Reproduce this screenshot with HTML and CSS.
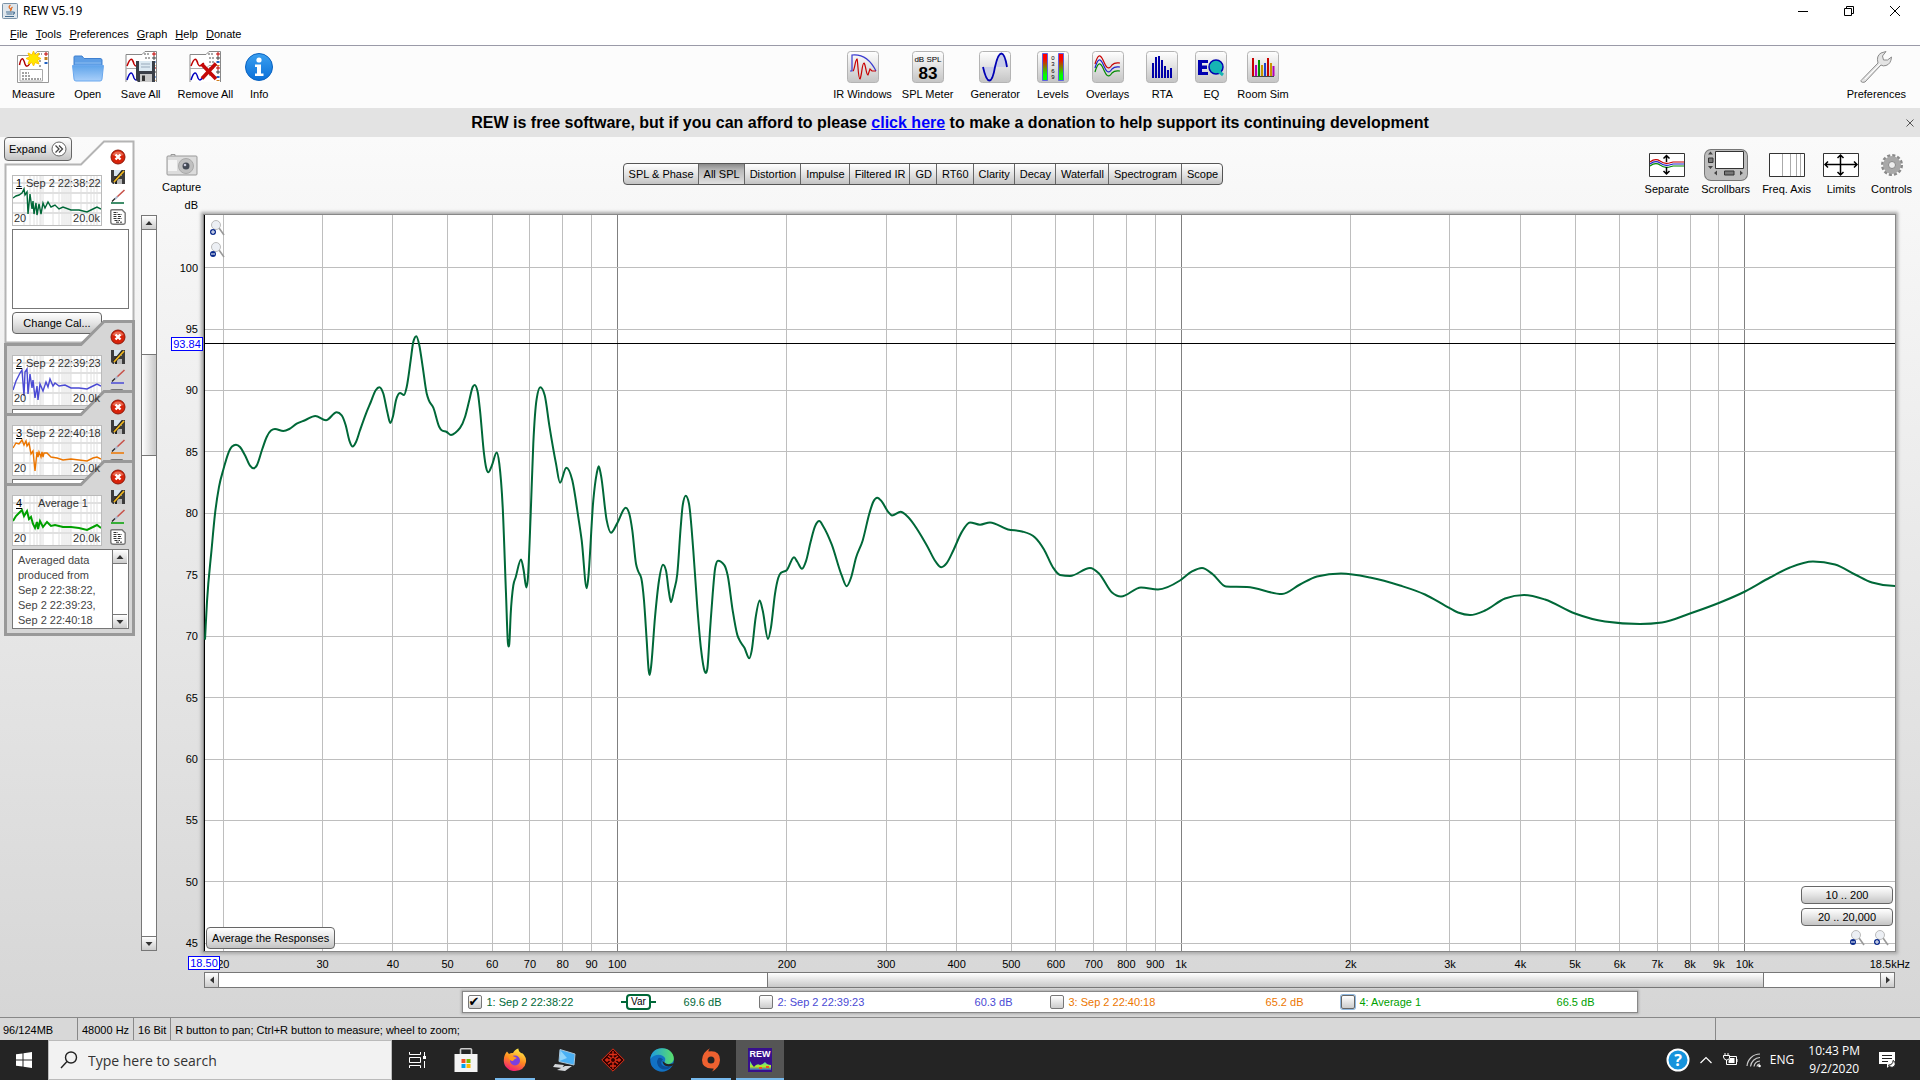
FILE: index.html
```
<!DOCTYPE html>
<html lang="en">
<head>
    <meta charset="UTF-8">
    <meta name="viewport" content="width=device-width, initial-scale=1.0">
    <title>REW V5.19</title>
    <link rel="stylesheet" href="styles.css">
</head>
<body>
    <!-- shared icons -->
    <svg class="defs" aria-hidden="true">
        <defs>
            <linearGradient id="gKey" x1="0" y1="0" x2="0" y2="1"><stop offset="0" stop-color="#fff"/><stop offset="1" stop-color="#c4c4c4"/></linearGradient>
            <linearGradient id="gBlue" x1="0" y1="0" x2="0" y2="1"><stop offset="0" stop-color="#5fa4ea"/><stop offset="1" stop-color="#a9cffa"/></linearGradient>
            <linearGradient id="gInfo" x1="0" y1="0" x2="0" y2="1"><stop offset="0" stop-color="#3ba0f0"/><stop offset="1" stop-color="#0a6fd8"/></linearGradient>
            <linearGradient id="gLevel" x1="0" y1="0" x2="0" y2="1"><stop offset="0.2" stop-color="#f00"/><stop offset="0.8" stop-color="#0f0"/></linearGradient>
            <linearGradient id="gFox" x1="0.7" y1="0" x2="0.3" y2="1"><stop offset="0" stop-color="#fff04a"/><stop offset="0.5" stop-color="#ff8a1f"/><stop offset="1" stop-color="#f0187a"/></linearGradient>
            <linearGradient id="gEdge" x1="0" y1="0" x2="1" y2="0"><stop offset="0" stop-color="#1d9be0"/><stop offset="1" stop-color="#5be06a"/></linearGradient>
            <linearGradient id="gRew" x1="0" y1="0" x2="0" y2="1"><stop offset="0" stop-color="#2ad0e0"/><stop offset="0.6" stop-color="#b8f020"/><stop offset="1" stop-color="#3050d0"/></linearGradient>
        </defs>
        <symbol id="key" viewBox="0 0 32 32"><rect x="0.5" y="0.5" width="31" height="31" rx="3" fill="url(#gKey)" stroke="#b4b4b4"/></symbol>
        <symbol id="sheets" viewBox="0 0 32 32">
            <path d="M1 3.500H17L20 .5H31V31H1Z" fill="#fff"/>
            <path d="M1 31V3.500H17L20 .5H31.500V31" fill="none" stroke="#888"/>
            <path d="M1 17.500H17L20 14.500H28" fill="none" stroke="#aaa"/>
            <path d="M2 15C5 7 7 6 9 13 11 17 12 14 15 12" fill="none" stroke="#c00000" stroke-width="1.500"/>
            <path d="M2 29C5 20 7 20 9 27 11 31 12 28 15 26" fill="none" stroke="#0000c0" stroke-width="1.500"/>
            <path d="M19 3H25M20 7H25M20 11H25M20 17H25M20 24H25" stroke="#555" stroke-dasharray="2 1"/>
            <path d="M28 2h2v2h-2zM28 16h2v2h-2z" fill="#fff" stroke="#c00000"/>
            <path d="M28 6h2v2h-2zM28 20h2v2h-2z" fill="#fff" stroke="#444"/>
            <path d="M27.500 10h3v2h-3zM27.500 25h3v2h-3z" fill="#2060c0"/>
            <path d="M27.500 14h3v1h-3zM27.500 29h3v1h-3z" fill="#d08020"/>
        </symbol>
        <symbol id="close" viewBox="0 0 16 16"><circle cx="8" cy="8" r="7" fill="#d8230a" stroke="#8e1a0a"/><path d="M2.500 6A6 6 0 0 1 13.500 6Q8 8 2.500 6" fill="#f08a70" opacity=".7"/><path d="M5.500 5.500 10.500 10.500M10.500 5.500 5.500 10.500" stroke="#fff" stroke-width="2.400"/></symbol>
        <symbol id="save" viewBox="0 0 16 16"><path d="M1 1H15V15H3L1 13Z" fill="#3c3c3c"/><path d="M4 1H12V7H4Z" fill="#d5e3ee"/><path d="M4 10H12V15H4Z" fill="#b8b8b8"/><path d="M5 11H7V15H5Z" fill="#222"/><path d="M4 13 13 2" stroke="#222" stroke-width="3.400"/><path d="M4 13 14 2" stroke="#f0b820" stroke-width="1.800"/></symbol>
        <symbol id="brush" viewBox="0 0 16 16"><path d="M14.500 1 7 8" stroke="#c8524a" stroke-width="1.600"/><path d="M7.500 7.500 5 10" stroke="#b0bcd0" stroke-width="2"/><path d="M5 9.500 2 12.500" stroke="#222" stroke-width="1.200"/><path d="M1 14H14" stroke="currentColor" stroke-width="1.500"/></symbol>
        <symbol id="note" viewBox="0 0 16 16"><path d="M2 .8H12L15.200 4V13.500Q15.200 15.200 13.500 15.200H3.500Q.8 15.200 .8 13V2Q.8 .8 2 .8Z" fill="#fff" stroke="#777" stroke-width="1.400"/><path d="M3.500 3.500H8M3.500 5.500H12M3.500 7.500H7M8 7.500H12M3.500 9.500H12M4.500 11.500H10M6 13.200H12" stroke="#333" stroke-dasharray="3 1"/></symbol>
        <symbol id="zoomIn" viewBox="0 0 16 16"><path d="M10 8 15 15" stroke="#999" stroke-width="1.600"/><circle cx="7" cy="5" r="4.500" fill="#eceff4" stroke="#bbb"/><circle cx="4" cy="12" r="3" fill="#0a2a8c"/><path d="M2 12H6M4 10V14" stroke="#fff"/></symbol>
        <symbol id="zoomOut" viewBox="0 0 16 16"><path d="M10 8 15 15" stroke="#999" stroke-width="1.600"/><circle cx="7" cy="5" r="4.500" fill="#eceff4" stroke="#bbb"/><circle cx="4" cy="12" r="3" fill="#0a2a8c"/><path d="M2 12H6" stroke="#fff"/></symbol>
        <symbol id="up" viewBox="0 0 8 8"><path d="M.5 6 4 2 7.500 6Z" fill="#333"/></symbol>
        <symbol id="down" viewBox="0 0 8 8"><path d="M.5 2 4 6 7.500 2Z" fill="#333"/></symbol>
        <symbol id="left" viewBox="0 0 8 8"><path d="M6 .5 2 4 6 7.500Z" fill="#333"/></symbol>
        <symbol id="right" viewBox="0 0 8 8"><path d="M2 .5 6 4 2 7.500Z" fill="#333"/></symbol>
    </svg>

    <header class="titlebar">
        <svg class="java" viewBox="0 0 16 16"><rect x=".5" y=".5" width="15" height="15" rx="1" fill="#dfe6ec" stroke="#7b93a8"/><path d="M8.500 2Q6 4 8 5.500T8 8M10.500 4Q8.500 5.500 9.500 7" fill="none" stroke="#e0702a" stroke-width="1.300"/><path d="M4 9H11M4.500 11H10.500M3 13.500H12M11 9Q14 9 11 11.500" fill="none" stroke="#456d90" stroke-width="1.200"/></svg>
        <h1>REW V5.19</h1>
        <div class="window-btns">
            <button aria-label="Minimize"><svg viewBox="0 0 10 10"><path d="M0 5.500H10"/></svg></button>
            <button aria-label="Restore"><svg viewBox="0 0 10 10"><path d="M.5 2.500H7.500V9.500H.5ZM2.500 2.500V.5H9.500V7.500H7.500"/></svg></button>
            <button aria-label="Close"><svg viewBox="0 0 10 10"><path d="M0 0 10 10M10 0 0 10"/></svg></button>
        </div>
    </header>
    <nav class="menubar">
        <button><u>F</u>ile</button>
        <button><u>T</u>ools</button>
        <button><u>P</u>references</button>
        <button><u>G</u>raph</button>
        <button><u>H</u>elp</button>
        <button><u>D</u>onate</button>
    </nav>

    <div class="toolbar">
        <div class="tools">
            <button class="tool">
                <svg viewBox="0 0 32 32"><path d="M.5 4.500H17L20 .5H31.500V31.500H.5Z" fill="#fff" stroke="#999"/><path d="M2.500 14C4 6 6 6 8 13 9 16 11 16 13 12" fill="none" stroke="#b00000" stroke-width="1.500"/><path d="M3 18.500H25.500V30H3Z" fill="#fff" stroke="#aaa"/><path d="M5 22H12M5 25H14M5 28H24M21 3H25M22 10H25M22 15H25" stroke="#444" stroke-dasharray="2 1"/><path d="M28 2h2v2h-2z" fill="#fff" stroke="#c00000"/><path d="M27.500 6h3v3h-3z" fill="#c08020"/><path d="M27.500 11h3v2h-3z" fill="#2060c0"/><path d="M16.500 0 18 4 22 2 20.500 6 24 7.500 20.500 9 22 13 18 11.500 16.500 15 15 11.500 11 13 12.500 9 9 7.500 12.500 6 11 2 15 4Z" fill="#ffe600" stroke="#ffc800"/></svg>
                <span>Measure</span>
            </button>
            <button class="tool">
                <svg viewBox="0 0 32 32"><path d="M2 17V6Q2 5 3 5H10L12 7.500H28Q30 7.500 30 9V17Z" fill="#5f9fe6" stroke="#3f80d0"/><path d="M3 12H29" stroke="#8cbcf0"/><path d="M.5 14.500H31.500L30 28Q30 30 28 30H4Q2 30 2 28Z" fill="url(#gBlue)" stroke="#6aa8ee"/></svg>
                <span>Open</span>
            </button>
            <button class="tool">
                <svg viewBox="0 0 32 32"><use href="#sheets"/><path d="M11 10H30V31H13L11 29Z" fill="#3a3f48"/><path d="M14 10H27V20H14Z" fill="#dce9f2"/><path d="M16 13H25M16 16H25" stroke="#9ab"/><path d="M15 23H27V31H15Z" fill="#c8c8c8"/><path d="M17 24.500H20V30H17Z" fill="#333"/></svg>
                <span>Save All</span>
            </button>
            <button class="tool">
                <svg viewBox="0 0 32 32"><use href="#sheets"/><path d="M12.500 13 27 28M27 12.500 13 27.500" stroke="#c40808" stroke-width="3.600"/></svg>
                <span>Remove All</span>
            </button>
            <button class="tool tight">
                <svg viewBox="0 0 32 32"><circle cx="16" cy="16" r="13.500" fill="url(#gInfo)" stroke="#0a62c0"/><circle cx="16" cy="9" r="2.600" fill="#fff"/><path d="M12 13.500H18V22.500H20.500V25H12V22.500H14V16H12Z" fill="#fff"/></svg>
                <span>Info</span>
            </button>
        </div>
        <div class="tools">
            <button class="tool">
                <svg viewBox="0 0 32 32"><use href="#key"/><path d="M3 20H5V4C14 3 23 8 29 20" fill="none" stroke="#3a3ad0" stroke-width="1.200"/><path d="M6 20C8 18 8 9 10 8 11 10 11 28 13 28 15 24 15 12 17 12 19 14 19 24 21 24L23 18 25 20H29" fill="none" stroke="#c80000" stroke-width="1.200"/></svg>
                <span>IR Windows</span>
            </button>
            <button class="tool tight">
                <svg viewBox="0 0 32 32"><use href="#key"/><text x="16" y="11" class="t8">dB SPL</text><text x="16" y="28" class="t17">83</text></svg>
                <span>SPL Meter</span>
            </button>
            <button class="tool">
                <svg viewBox="0 0 32 32"><use href="#key"/><path d="M4 16H28C25 -2 20 -2 16 16 13 34 8 34 4 16Z" fill="#c8cce8"/><path d="M4 16C8 34 13 34 16 16 20 -2 25 -2 28 16" fill="none" stroke="#0000b4" stroke-width="1.800"/></svg>
                <span>Generator</span>
            </button>
            <button class="tool">
                <svg viewBox="0 0 32 32"><use href="#key"/><path d="M5.500 2.500H10.500V29.500H5.500ZM21.500 2.500H26.500V29.500H21.500Z" fill="url(#gLevel)" stroke="#6060e0"/><text x="16" y="9" class="t6">0</text><text x="16" y="15" class="t6">3</text><text x="16" y="22" class="t6">6</text><text x="16" y="28" class="t6">9</text></svg>
                <span>Levels</span>
            </button>
            <button class="tool">
                <svg viewBox="0 0 32 32"><use href="#key"/><g fill="none" stroke-width="1.200"><path d="M3 13C6 3 8 3 11 9 14 16 16 20 20 14 23 11 25 12 28 12" stroke="#c80000"/><path d="M3 17C6 7 8 7 11 13 14 20 16 24 20 18 23 15 25 16 28 16" stroke="#2020c8"/><path d="M3 21C6 11 8 11 11 17 14 24 16 28 20 22 23 19 25 20 28 20" stroke="#008a00"/></g></svg>
                <span>Overlays</span>
            </button>
            <button class="tool">
                <svg viewBox="0 0 32 32"><use href="#key"/><path d="M6 27V12h2V27zM9 27V6h2V27zM12 27V5h2V27zM15 27V9h2V27zM18 27V15h2V27zM21 27V19h2V27zM24 27V17h2V27z" fill="#0000a8"/></svg>
                <span>RTA</span>
            </button>
            <button class="tool">
                <svg viewBox="0 0 32 32"><use href="#key"/><path d="M3 9H13V12H7V14.500H12V18H7V21H13V24H3Z" fill="#0000b0"/><circle cx="21" cy="16" r="7" fill="#16b4b4" stroke="#0000b0" stroke-width="1.500"/><path d="M22 19 28 24" stroke="#16b4b4" stroke-width="3"/></svg>
                <span>EQ</span>
            </button>
            <button class="tool tight">
                <svg viewBox="0 0 32 32"><use href="#key"/><path d="M5 25.500H27" stroke="#444"/><path d="M6 25V7" stroke="#c80000" stroke-width="2"/><path d="M9 25V14" stroke="#b400b4" stroke-width="2"/><path d="M12 25V9" stroke="#009000" stroke-width="2"/><path d="M15 25V14" stroke="#c89600" stroke-width="2"/><path d="M18 25V12" stroke="#2040c8" stroke-width="2"/><path d="M21 25V7" stroke="#c80000" stroke-width="2"/><path d="M24 25V12" stroke="#c89600" stroke-width="2"/><path d="M26.500 25V15" stroke="#b400b4" stroke-width="2"/></svg>
                <span>Room Sim</span>
            </button>
        </div>
        <div class="tools">
            <button class="tool">
                <svg viewBox="0 0 32 32"><path d="M2 28.500 18 12Q16 5 21 2L26 .5 22.500 5 23.500 9 27.500 9 31.500 6Q31 13 26 14.500 23 15.500 21 14L5 31Q2.500 32 1 30.500 .5 29.500 2 28.500Z" fill="#e4e4e4" stroke="#8c8c8c"/><path d="M5 28 20 13" stroke="#fff"/></svg>
                <span>Preferences</span>
            </button>
        </div>
    </div>

    <div class="banner">
        <p>REW is free software, but if you can afford to please <a href="#">click here</a> to make a donation to help support its continuing development</p>
        <button aria-label="Dismiss"><svg viewBox="0 0 8 8"><path d="M.5 .5 7.500 7.500M7.500 .5 .5 7.500"/></svg></button>
    </div>

    <main class="main">
        <aside class="sidebar">
            <button class="btn expand">Expand <svg viewBox="0 0 16 16"><circle cx="8" cy="8" r="7" fill="#fff" stroke="#666"/><path d="M4.500 4.500 8 8 4.500 11.500M8 4.500 11.500 8 8 11.500" fill="none" stroke="#444" stroke-width="1.300"/></svg></button>

            <section class="card open c1">
                <svg class="shape" preserveAspectRatio="none" viewBox="0 0 131 204"><path d="M1.500 24.500H77L100 1.500H129.500V202.500H1.500Z"/></svg>
                <div class="thumb" data-curve="a"><b>1</b><span>Sep 2 22:38:22</span><i>20</i><i>20.0k</i></div>
                <div class="side"><svg><use href="#close"/></svg><svg><use href="#save"/></svg><svg><use href="#brush"/></svg><svg><use href="#note"/></svg></div>
                <textarea class="notes" aria-label="Notes 1"></textarea>
                <button class="btn cal">Change Cal...</button>
            </section>
            <section class="card c2">
                <svg class="shape" preserveAspectRatio="none" viewBox="0 0 131 94"><path d="M1.500 96V24.500H77L100 1.500H129.500V96"/></svg>
                <div class="thumb" data-curve="b"><b>2</b><span>Sep 2 22:39:23</span><i>20</i><i>20.0k</i></div>
                <div class="side"><svg><use href="#close"/></svg><svg><use href="#save"/></svg><svg><use href="#brush"/></svg><svg><use href="#note"/></svg></div>
                <textarea class="notes" aria-label="Notes 2"></textarea>
            </section>
            <section class="card c3">
                <svg class="shape" preserveAspectRatio="none" viewBox="0 0 131 94"><path d="M1.500 96V24.500H77L100 1.500H129.500V96"/></svg>
                <div class="thumb" data-curve="c"><b>3</b><span>Sep 2 22:40:18</span><i>20</i><i>20.0k</i></div>
                <div class="side"><svg><use href="#close"/></svg><svg><use href="#save"/></svg><svg><use href="#brush"/></svg><svg><use href="#note"/></svg></div>
                <textarea class="notes" aria-label="Notes 3"></textarea>
            </section>
            <section class="card last c4">
                <svg class="shape" preserveAspectRatio="none" viewBox="0 0 131 176"><path d="M1.500 24.500H77L100 1.500H129.500V174.500H1.500Z"/></svg>
                <div class="thumb" data-curve="d"><b>4</b><span>Average 1</span><i>20</i><i>20.0k</i></div>
                <div class="side"><svg><use href="#close"/></svg><svg><use href="#save"/></svg><svg><use href="#brush"/></svg><svg><use href="#note"/></svg></div>
                <div class="notes">
                    <p>Averaged data<br>produced from<br>Sep 2 22:38:22,<br>Sep 2 22:39:23,<br>Sep 2 22:40:18</p>
                    <div class="scroll-y"><button aria-label="Scroll up"><svg><use href="#up"/></svg></button><span class="track"></span><button aria-label="Scroll down"><svg><use href="#down"/></svg></button></div>
                </div>
            </section>
        </aside>

        <div class="scroll-y side-scroll">
            <button aria-label="Scroll up"><svg><use href="#up"/></svg></button>
            <span class="track"><span class="thumb-y"></span></span>
            <button aria-label="Scroll down"><svg><use href="#down"/></svg></button>
        </div>

        <section class="graph">
            <div class="graph-head">
                <button class="tool">
                    <svg viewBox="0 0 32 26"><path d="M2 5H30Q31 5 31 6V23Q31 24 30 24H2Q1 24 1 23V6Q1 5 2 5Z" fill="#dcdcdc" stroke="#999"/><path d="M5 5V3.500H9V5" fill="#ccc" stroke="#999"/><path d="M2 9H11V20H2" fill="#f4f4f4"/><circle cx="20" cy="15" r="7.500" fill="#c0c0c0" stroke="#aaa"/><circle cx="20" cy="15" r="3.500" fill="#444a55"/><circle cx="19" cy="14" r="1.300" fill="#ccd"/></svg>
                    <span>Capture</span>
                </button>
                <div class="tabs">
                    <button>SPL &amp; Phase</button><button class="active">All SPL</button><button>Distortion</button><button>Impulse</button><button>Filtered IR</button><button>GD</button><button>RT60</button><button>Clarity</button><button>Decay</button><button>Waterfall</button><button>Spectrogram</button><button>Scope</button>
                </div>
                <div class="tools views">
                    <button class="tool">
                        <svg viewBox="0 0 36 24"><path d="M.5 .5H35.500V23.500H.5Z" fill="#fff" stroke="#333"/><g fill="none" stroke-width="1.200"><path d="M1 9C5 6 8 6 11 8 17 12 20 10 24 9H35" stroke="#c80000"/><path d="M1 11C5 8 8 8 11 10 17 14 20 12 24 11H35" stroke="#2020c8"/><path d="M1 13C5 10 8 10 11 12 17 16 20 14 24 13H35" stroke="#008a00"/></g><path d="M17.500 2.500V9M14.500 5.500 17.500 2.500 20.500 5.500M17.500 14V21M14.500 18 17.500 21 20.500 18" fill="none" stroke="#000" stroke-width="1.500"/></svg>
                        <span>Separate</span>
                    </button>
                    <button class="tool pressed">
                        <svg viewBox="0 0 36 24"><path d="M7.500 -1.500H35.500V15.500H7.500Z" fill="#fff" stroke="#333"/><path d="M0 1.500 2.500 -1.500 5 1.500ZM0 13 2.500 16 5 13ZM9 17.500V22.500L6 20ZM32 17.500V22.500L35 20Z" fill="#444"/><path d="M.5 5H5V9.500H.5ZM16.500 18H26V22H16.500Z" fill="#777" stroke="#333"/></svg>
                        <span>Scrollbars</span>
                    </button>
                    <button class="tool">
                        <svg viewBox="0 0 36 24"><path d="M.5 .5H35.500V23.500H.5Z" fill="#fff" stroke="#333"/><path d="M13.500 1V23M21.500 1V23M27.500 1V23M31.500 1V23" stroke="#aaa"/></svg>
                        <span>Freq. Axis</span>
                    </button>
                    <button class="tool">
                        <svg viewBox="0 0 36 24"><path d="M.5 .5H35.500V23.500H.5Z" fill="#fff" stroke="#333"/><path d="M2 11.500H34M17.500 2V22M5 8.500 2 11.500 5 14.500M31 8.500 34 11.500 31 14.500M14.500 5 17.500 2 20.500 5M14.500 19 17.500 22 20.500 19" fill="none" stroke="#000" stroke-width="1.500"/></svg>
                        <span>Limits</span>
                    </button>
                    <button class="tool">
                        <svg viewBox="0 0 36 24"><circle cx="18" cy="12" r="9.500" fill="none" stroke="#8a8a8a" stroke-width="3" stroke-dasharray="3 1.970"/><circle cx="18" cy="12" r="6" fill="#ddd" stroke="#a8a8a8" stroke-width="6"/><circle cx="18" cy="12" r="3.500" fill="#eee" stroke="#888"/></svg>
                        <span>Controls</span>
                    </button>
                </div>
            </div>
            <div class="graph-body">
                <svg class="yaxis" id="yaxis"></svg>
                <div class="plot">
                    <svg class="canvas" id="canvas" viewBox="204 215 1691 735" preserveAspectRatio="none"></svg>
                    <div class="zoom-y">
                        <button aria-label="Zoom in"><svg><use href="#zoomIn"/></svg></button>
                        <button aria-label="Zoom out"><svg><use href="#zoomOut"/></svg></button>
                    </div>
                    <button class="btn average">Average the Responses</button>
                    <div class="ranges">
                        <button class="btn">10 .. 200</button>
                        <button class="btn">20 .. 20,000</button>
                        <div class="zoom-x">
                            <button aria-label="Zoom out"><svg><use href="#zoomOut"/></svg></button>
                            <button aria-label="Zoom in"><svg><use href="#zoomIn"/></svg></button>
                        </div>
                    </div>
                    <span class="cursor cursor-y">93.84</span>
                    <span class="cursor cursor-x">18.50</span>
                </div>
                <svg class="xaxis" id="xaxis"></svg>
                <div class="scroll-x">
                    <button aria-label="Scroll left"><svg><use href="#left"/></svg></button>
                    <span class="track"><span class="thumb-x"></span></span>
                    <button aria-label="Scroll right"><svg><use href="#right"/></svg></button>
                </div>
            </div>
            <div class="legend">
                <div class="trace c1">
                    <label><input type="checkbox" checked>1: Sep 2 22:38:22</label>
                    <button class="var">Var</button>
                    <output>69.6 dB</output>
                </div>
                <div class="trace c2"><label><input type="checkbox">2: Sep 2 22:39:23</label><output>60.3 dB</output></div>
                <div class="trace c3"><label><input type="checkbox">3: Sep 2 22:40:18</label><output>65.2 dB</output></div>
                <div class="trace c4"><label><input type="checkbox" class="focus">4: Average 1</label><output>66.5 dB</output></div>
            </div>
        </section>
    </main>

    <footer class="status">
        <span class="mem">96/124MB</span>
        <span>48000 Hz</span>
        <span>16 Bit</span>
        <span class="hint">R button to pan; Ctrl+R button to measure; wheel to zoom;</span>
        <span class="rest"></span>
    </footer>

    <div class="taskbar">
        <button class="start" aria-label="Start"><svg viewBox="0 0 16 16"><path d="M0 2.300 6.500 1.400V7.500H0ZM7.500 1.200 16 0V7.500H7.500ZM0 8.500H6.500V14.600L0 13.700ZM7.500 8.500H16V16L7.500 14.800Z" fill="#fff"/></svg></button>
        <label class="search">
            <svg viewBox="0 0 18 18"><circle cx="11" cy="6.500" r="5.500" fill="none" stroke="#222" stroke-width="1.400"/><path d="M7 10.500 1 17" stroke="#222" stroke-width="1.400"/></svg>
            <input type="text" placeholder="Type here to search">
        </label>
        <div class="apps">
            <button class="app" aria-label="Task view"><svg viewBox="0 0 24 24"><path d="M4.500 4V6.500H15.500V4M4.500 20V17.500H15.500V20M4.500 9.500H15.500V14.500H4.500ZM19.500 4V8M19.500 13V20" fill="none" stroke="#fff"/><path d="M18 8H21V11H18Z" fill="#fff"/></svg></button>
            <button class="app" aria-label="Store"><svg viewBox="0 0 24 24"><path d="M6.500 6V1.500Q6.500 .8 7.500 .8H16.500Q17.500 .8 17.500 1.500V6" fill="none" stroke="#ccc" stroke-width="1.600"/><path d="M.5 6H23.500V24H.5Z" fill="#f4f4f4"/><path d="M7.500 11h4v4h-4z" fill="#f25022"/><path d="M12.500 11h4v4h-4z" fill="#7fba00"/><path d="M7.500 16h4v4h-4z" fill="#00a4ef"/><path d="M12.500 16h4v4h-4z" fill="#ffb900"/></svg></button>
            <button class="app running" aria-label="Firefox"><svg viewBox="0 0 24 24"><path d="M12 23C5 23 .5 18 .8 12 1 8 2 6 4 3.500L6 6Q8 4.500 10 5 12 1 15.500 .5 15 3 18 5 20 5 21 7 23.500 10 23 14 21.500 22.500 12 23Z" fill="url(#gFox)"/><circle cx="12" cy="12.500" r="5" fill="#7a3fe0"/><path d="M5 8Q8 7 11 8.500L14 10Q11 11 10 13 6 13 5 8Z" fill="#ff9a1f"/></svg></button>
            <button class="app" aria-label="Remote computer"><svg viewBox="0 0 24 24"><path d="M8 1.500 23 6 22 17 7 13.500Z" fill="#4ab0f4" stroke="#a8c4d8"/><path d="M8.500 2.500 15 10 7.500 13Z" fill="#90d4fa"/><path d="M3 16 12 17 10 20 1 19ZM13 18 20 18 13 23 5 22Z" fill="#d4d8dc"/></svg></button>
            <button class="app" aria-label="Diamond"><svg viewBox="0 0 24 24"><path d="M12 .8 23.200 12 12 23.200 .8 12Z" fill="#300" stroke="#e03018"/><path d="M12 3V21M4 12H20M7 8 17 16M17 8 7 16M8 6.500H16M9 18H15M6 10V14M18 10V14" stroke="#e03018" stroke-width="1.300"/><circle cx="12" cy="12" r="2.500" fill="#300" stroke="#e03018"/></svg></button>
            <button class="app" aria-label="Edge"><svg viewBox="0 0 24 24"><circle cx="12" cy="12" r="11.800" fill="#1272c4"/><path d="M.3 11C1 4 6 .2 12 .2 19 .2 24 5 23.800 11 23.500 15 19 17 15 15.500 13.500 14.500 16 13 15 10 13 6 5 5 .3 11Z" fill="url(#gEdge)"/><path d="M8.500 10Q5 15 10 20 16 24 22 18 15 20 12 17 10 14 13 11.500 11 9 8.500 10Z" fill="#0b4e98"/><path d="M14.500 14.500Q17 17.500 22.500 15.500L24 16 22 18Q13 20 12.500 13Z" fill="#242424"/></svg></button>
            <button class="app running" aria-label="Origin"><svg viewBox="0 0 24 24"><path d="M11 .3Q9 2 9.500 3.500 21 2 21 12 20.500 20 12.500 23.800 15 21 14.500 20.400 3 21 3 12 3.500 4 11 .3ZM12 8.500A3.500 3.500 0 1 0 12 15.500 3.500 3.500 0 1 0 12 8.500Z" fill="#ee6130" fill-rule="evenodd"/></svg></button>
            <button class="app running current" aria-label="REW"><svg viewBox="0 0 24 24"><rect width="24" height="24" fill="#38108c"/><path d="M2 22V13Q4 17 6 19 9 15 12 17 15 16 17 14 19 17 23 17V22Z" fill="url(#gRew)"/><path d="M11 19H14V21H11ZM18 18H21V20H18Z" fill="#f05020"/><text x="12" y="9" class="rew">REW</text></svg></button>
        </div>

        <div class="tray">
            <svg class="help" viewBox="0 0 24 24"><circle cx="12" cy="12" r="10.500" fill="#1693dc" stroke="#fff" stroke-width="2"/><text x="12" y="18" class="q">?</text></svg>
            <svg viewBox="0 0 16 16"><path d="M2.500 11 8 5.500 13.500 11" fill="none" stroke="#fff" stroke-width="1.200"/></svg>
            <svg viewBox="0 0 16 16"><path d="M7.500 4.500H14.500V12.500H4.500V10M15 7V10M3 1V3M6 1V3M1.500 3.500H7.500V6Q7 8 4.500 8T1.500 5ZM4.500 8V11" fill="none" stroke="#fff"/><path d="M8 6H12.500V11H6.500V9Z" fill="#fff"/></svg>
            <svg viewBox="0 0 16 16"><path d="M1 14A13 13 0 0 1 14 2M4.500 14.500A10 10 0 0 1 14 5.500M8 14.500A6.500 6.500 0 0 1 14 9M11 14.500A3 3 0 0 1 14 12" fill="none" stroke="#ccc" stroke-width="1.200"/><circle cx="13.500" cy="14" r="1.300" fill="#fff"/></svg>
            <span>ENG</span>
            <time>10:43 PM<br>9/2/2020</time>
            <svg class="notify" viewBox="0 0 16 16"><path d="M0 0H16V12H12L8 16V12H0Z" fill="#fff"/><path d="M3 3.500H13M3 6.500H13M3 9.500H9" stroke="#222"/><path d="M14 8.500A3.500 3.500 0 1 1 9.500 13 4 4 0 0 0 14 8.500Z" fill="#fff" stroke="#222"/></svg>
        </div>
    </div>

    <script src="script.js"></script>
</body>
</html>
```

FILE: styles.css
```
* {
    box-sizing: border-box;
}

body {
    display: flex;
    flex-direction: column;
    margin: 0;
    min-height: 100vh;
    background: #fff;
    color: #000;
    font: 11px/14px "Liberation Sans", Arial, sans-serif;
}

button {
    margin: 0;
    padding: 0;
    border: 0;
    background: none;
    color: inherit;
    font: inherit;
}

svg {
    display: block;
}

.defs {
    position: absolute;
    width: 0;
    height: 0;
}

/* title and menu */
.titlebar {
    display: flex;
    align-items: center;
    height: 22px;
    padding: 0 2px;
}

.titlebar .java {
    width: 16px;
    height: 16px;
    margin-right: 5px;
}

.titlebar h1 {
    margin: 0;
    font: 12px/16px "Noto Sans", sans-serif;
}

.window-btns {
    display: flex;
    margin-left: auto;
}

.window-btns button {
    width: 46px;
    padding: 0 18px;
}

.window-btns svg {
    width: 10px;
    height: 10px;
    fill: none;
    stroke: #000;
}

.menubar {
    display: flex;
    align-items: center;
    gap: 8px;
    height: 24px;
    padding-left: 10px;
    border-bottom: 1px solid #9a9aa8;
}

/* toolbar */
.toolbar {
    display: flex;
    justify-content: space-between;
    height: 62px;
    padding: 5px 14px 0 12px;
    background: #fcfcfc;
}

.tools {
    display: flex;
    align-items: flex-start;
    gap: 17px;
}

.tool {
    display: flex;
    flex-direction: column;
    align-items: center;
    min-width: 32px;
    white-space: nowrap;
}

.tool.tight {
    margin-left: -7px;
}

.tool svg {
    width: 32px;
    height: 32px;
    margin-bottom: 4px;
    overflow: visible;
}

.tool text {
    text-anchor: middle;
}

.t6 {
    font-size: 6px;
}

.t8 {
    font-size: 8px;
}

.t17 {
    font-size: 17px;
    font-weight: bold;
}

.banner {
    display: flex;
    align-items: center;
    height: 29px;
    padding: 1px 6px 0 0;
    background: #e3e3e3;
}

.banner p {
    flex: 1;
    margin: 0;
    padding-right: 6px;
    font-size: 16px;
    font-weight: bold;
    line-height: 20px;
    text-align: center;
}

.banner a {
    color: #00f;
}

.banner svg {
    width: 8px;
    height: 8px;
    stroke: #555;
}

/* workspace */
.main {
    flex: 1;
    display: grid;
    grid-template-columns: 141px 16px 1fr;
    background: linear-gradient(#fafafa, #d6d6d6);
}

.btn {
    height: 22px;
    border: 1px solid #666;
    border-radius: 4px;
    background: linear-gradient(#fff, #e4e4e4 50%, #c4c4c4);
}

.c1 {
    color: #006838;
}

.c2 {
    color: #4a4ad4;
}

.c3 {
    color: #ec7600;
}

.c4 {
    color: #00a000;
}

.sidebar {
    position: relative;
    padding: 3px 0 0 4px;
}

.expand {
    position: absolute;
    top: 0;
    left: 4px;
    z-index: 1;
    display: flex;
    align-items: center;
    gap: 5px;
    height: 24px;
    padding: 0 4px;
}

.expand svg {
    width: 16px;
    height: 16px;
}

/* measurement card with a cut corner */
.card {
    position: relative;
    display: grid;
    grid-template-columns: 90px 24px;
    gap: 3px 4px;
    align-content: start;
    width: 131px;
    height: 94px;
    padding: 35px 0 0 8px;
    overflow: hidden;
}

.card + .card {
    margin-top: -24px;
}

.card.open {
    height: 204px;
}

.card.last {
    height: 176px;
}

.shape {
    position: absolute;
    inset: 0;
    width: 100%;
    height: 100%;
    fill: #d6d6d6;
    stroke: #999;
    stroke-width: 3px;
}

.open .shape {
    fill: #fff;
    stroke: #b4b4b4;
    stroke-width: 2px;
}

.thumb {
    position: relative;
    display: grid;
    grid-template-columns: 12px 74px;
    align-content: space-between;
    height: 51px;
    padding: 0 1px;
    border: 1px solid #bbb;
    background: #fff;
    color: #333;
}

.thumb > * {
    position: relative;
    z-index: 1;
    white-space: nowrap;
    font-style: normal;
}

.thumb b {
    justify-self: start;
    margin-left: 2px;
    color: #000;
    font-weight: normal;
    text-decoration: underline;
}

.thumb span {
    text-align: center;
}

.thumb i + i {
    text-align: right;
}

.thumb .mini {
    position: absolute;
    inset: 0;
    z-index: 0;
    width: 100%;
    height: 100%;
}

.side {
    position: relative;
    display: flex;
    flex-direction: column;
    align-items: center;
    gap: 4px;
    height: 51px;
    margin-top: -26px;
}

.side svg {
    flex: none;
    width: 16px;
    height: 16px;
}

.notes {
    position: relative;
    grid-column: 1 / 3;
    display: flex;
    width: 117px;
    height: 80px;
    margin: 0;
    padding: 0;
    border: 1px solid #777;
    background: #fff;
    color: #444;
    resize: none;
}

.notes p {
    flex: 1;
    margin: 3px 0 0 5px;
    line-height: 15px;
    white-space: nowrap;
}

.cal {
    position: relative;
    width: 90px;
    color: #000;
}

/* scroll bars */
.scroll-y,
.scroll-x {
    display: flex;
    border: 1px solid #777;
    background: #fff;
}

.scroll-y {
    flex-direction: column;
    width: 16px;
}

.scroll-x {
    height: 16px;
}

.notes .scroll-y {
    border-width: 0 0 0 1px;
}

.scroll-y button,
.scroll-x button {
    display: grid;
    flex: none;
    place-items: center;
    width: 14px;
    height: 14px;
    background: linear-gradient(#fff, #ccc);
}

.scroll-y button:first-child {
    border-bottom: 1px solid #777;
}

.scroll-y button:last-child {
    border-top: 1px solid #777;
}

.scroll-x button:first-child {
    border-right: 1px solid #777;
}

.scroll-x button:last-child {
    border-left: 1px solid #777;
}

.scroll-y button svg,
.scroll-x button svg {
    width: 8px;
    height: 8px;
}

.track {
    position: relative;
    flex: 1;
}

.thumb-y {
    position: absolute;
    top: 17.5%;
    left: 0;
    right: 0;
    height: 14.5%;
    border: solid #777;
    border-width: 1px 0;
    background: linear-gradient(90deg, #fff, #c8c8c8);
}

.thumb-x {
    position: absolute;
    top: 0;
    bottom: 0;
    left: 33%;
    width: 60%;
    border: solid #777;
    border-width: 0 1px;
    background: linear-gradient(#fff, #c8c8c8);
}

.side-scroll {
    margin: 78px 0 66px;
}

/* graph */
.graph {
    display: flex;
    flex-direction: column;
    min-width: 0;
    padding-bottom: 5px;
}

.graph-head {
    display: flex;
    justify-content: space-between;
    align-items: flex-start;
    height: 78px;
    padding: 14px 8px 0 5px;
}

.graph-head .tool svg {
    height: 26px;
    margin-bottom: 3px;
}

.graph-head .views {
    gap: 12px;
}

.graph-head .views .tool svg {
    width: 36px;
    height: 24px;
    margin: 2px 0 5px;
}

.graph-head .pressed svg {
    border-radius: 3px;
    background: #bdbdbd;
    box-shadow: 0 0 0 3px #bdbdbd, 0 0 0 4px #777;
}

.tabs {
    display: flex;
    height: 22px;
    margin-top: 12px;
    border: 1px solid #555;
    border-radius: 4px;
    background: linear-gradient(#fff, #e4e4e4 50%, #c4c4c4);
    overflow: hidden;
}

.tabs button {
    padding: 0 4px 0 5px;
}

.tabs button + button {
    border-left: 1px solid #666;
}

.tabs .active {
    background: linear-gradient(#8a8a8a, #b8b8b8 30%, #e0e0e0);
}

.graph-body {
    flex: 1;
    display: grid;
    grid-template: 1fr 21px 16px / 47px 1fr;
    padding-right: 25px;
}

.yaxis,
.xaxis {
    width: 100%;
    height: 100%;
    overflow: visible;
}

.xaxis,
.scroll-x {
    grid-column: 2;
}

.yaxis text {
    text-anchor: end;
}

.xaxis text {
    text-anchor: middle;
}

.plot {
    position: relative;
    background: #fff;
    box-shadow: 0 0 0 1px #888, 0 0 3px 3px #aaa;
}

.canvas {
    position: absolute;
    inset: 0;
    width: 100%;
    height: 100%;
}

.canvas line {
    stroke: #bebebe;
    shape-rendering: crispEdges;
}

.canvas .decade {
    stroke: #808080;
}

.canvas .mark {
    stroke: #000;
}

.canvas path {
    fill: none;
    stroke: #006838;
    stroke-width: 2px;
    stroke-linejoin: round;
}

.zoom-y {
    position: absolute;
    top: 5px;
    left: 5px;
    display: grid;
    gap: 6px;
}

.zoom-y svg,
.zoom-x svg {
    width: 16px;
    height: 16px;
}

.average {
    position: absolute;
    left: 2px;
    bottom: 2px;
    padding: 0 5px;
}

.ranges {
    position: absolute;
    right: 2px;
    bottom: 5px;
    display: grid;
    gap: 4px;
    width: 92px;
}

.ranges .btn {
    height: 18px;
}

.zoom-x {
    display: flex;
    justify-content: flex-end;
    gap: 8px;
    padding-right: 4px;
}

.cursor {
    position: absolute;
    width: 32px;
    height: 14px;
    border: 1px solid #00f;
    background: #fff;
    color: #00f;
    line-height: 12px;
    text-align: center;
}

.cursor-y {
    top: 122px;
    left: -33px;
}

.cursor-x {
    left: -16px;
    bottom: -19px;
}

/* legend */
.legend {
    display: grid;
    grid-template-columns: repeat(4, 1fr);
    align-items: center;
    align-self: center;
    width: 1174px;
    max-width: 100%;
    height: 20px;
    margin: 4px 0 0 22px;
    padding: 0 5px;
    background: #fff;
    box-shadow: 0 0 0 1px #888, 0 0 2px 2px #aaa;
}

.trace {
    display: flex;
    align-items: center;
    justify-content: space-between;
    padding-right: 37px;
}

.trace label {
    display: flex;
    align-items: center;
    gap: 5px;
}

.trace input {
    appearance: none;
    width: 14px;
    height: 14px;
    margin: 0;
    border: 1px solid #777;
    border-radius: 2px;
    background: linear-gradient(#fff, #ccc);
}

.trace input:checked::after {
    content: "✔";
    display: block;
    color: #000;
    font: 13px/12px "DejaVu Sans", sans-serif;
}

.trace .focus {
    border-color: #666;
    box-shadow: 0 0 0 1px #8fb8e0;
}

.var {
    position: relative;
    width: 25px;
    height: 16px;
    margin-left: 20px;
    border: 2px solid #006838;
    border-radius: 4px;
    color: #000;
    font-size: 10px;
    line-height: 12px;
}

.var::before,
.var::after {
    content: "";
    position: absolute;
    top: 5px;
    width: 5px;
    height: 2px;
    background: #006838;
}

.var::before {
    left: -7px;
}

.var::after {
    right: -7px;
}

/* status line */
.status {
    display: flex;
    height: 23px;
    border-top: 1px solid #888;
    background: #d8d8d8;
    line-height: 25px;
}

.status span {
    padding: 0 4px;
    border-right: 1px solid #888;
}

.status .mem {
    width: 78px;
    padding-left: 3px;
}

.status .hint {
    flex: 1;
}

.status .rest {
    width: 204px;
    border: 0;
}

/* taskbar */
.taskbar {
    display: flex;
    height: 40px;
    background: #242424;
    color: #fff;
    font: 12px/16px "Open Sans", sans-serif;
}

.start {
    display: grid;
    place-items: center;
    width: 48px;
}

.start svg {
    width: 16px;
    height: 16px;
}

.search {
    display: flex;
    align-items: center;
    gap: 10px;
    width: 344px;
    padding-left: 11px;
    border: 1px solid #bbb;
    background: #f2f2f2;
}

.search svg {
    width: 18px;
    height: 18px;
}

.search input {
    flex: 1;
    min-width: 0;
    padding: 2px 0 0;
    border: 0;
    background: none;
    color: #333;
    font: 14px/20px "Open Sans", sans-serif;
}

.search input::placeholder {
    color: #333;
}

.apps {
    display: flex;
    gap: 1px;
    padding-left: 1px;
}

.app {
    display: grid;
    place-items: center;
    width: 48px;
    background: linear-gradient(#76b9ed, #76b9ed) center bottom / 0 2px no-repeat;
}

.app svg {
    width: 24px;
    height: 24px;
}

.running {
    background-size: 40px 2px;
}

.current {
    background-color: #555;
    background-size: 48px 2px;
}

.rew {
    fill: #fff;
    font: bold 9px/10px "Liberation Sans", sans-serif;
    text-anchor: middle;
}

.q {
    fill: #fff;
    font: bold 16px/16px "Open Sans", sans-serif;
    text-anchor: middle;
}

.tray {
    display: flex;
    align-items: center;
    gap: 8px;
    margin-left: auto;
    padding-right: 25px;
}

.tray svg {
    width: 16px;
    height: 16px;
}

.tray .help {
    width: 24px;
    height: 24px;
}

.tray time {
    margin: 0 6px;
    line-height: 18px;
    text-align: center;
}

.tray .notify {
    margin-left: 5px;
}
```

FILE: script.js
```
var NS = 'http://www.w3.org/2000/svg';

function add(parent, name, attrs, text) {
    var el = document.createElementNS(NS, name);
    for (var k in attrs) el.setAttribute(k, attrs[k]);
    if (text) el.textContent = text;
    parent.appendChild(el);
    return el;
}

// plot area in its own units
var LEFT = 204, TOP = 215, W = 1691, H = 735;

function fx(f) {
    return 617.3 + 563.7 * (Math.log10(f) - 2);
}
function dy(db) {
    return 267.5 + (100 - db) * 12.27;
}

var canvas = document.querySelector('#canvas');
var xaxis = document.querySelector('#xaxis');
var yaxis = document.querySelector('#yaxis');

// frequency grid
[10, 100, 1000, 10000].forEach(function (dec) {
    for (var n = 1; n < 10; n++) {
        var f = n * dec;
        if (f < 20 || f > 18000) continue;
        var x = fx(f);
        add(canvas, 'line', { x1: x, x2: x, y1: TOP, y2: TOP + H, class: n === 1 ? 'decade' : '' });
        add(xaxis, 'text', { x: (x - LEFT) / W * 100 + '%', y: 17 }, f >= 1000 ? f / 1000 + 'k' : String(f));
    }
});
add(xaxis, 'text', { x: '99.7%', y: 17 }, '18.5kHz');

// level grid
for (var db = 100; db >= 45; db -= 5) {
    var y = dy(db);
    add(canvas, 'line', { x1: LEFT, x2: LEFT + W, y1: y, y2: y });
    add(yaxis, 'text', { x: 41, y: (y - TOP + 4) / H * 100 + '%' }, String(db));
}
add(yaxis, 'text', { x: 41, y: -6 }, 'dB');
add(canvas, 'line', { x1: LEFT, x2: LEFT + W, y1: 343.5, y2: 343.5, class: 'mark' });
add(canvas, 'line', { x1: LEFT + 0.5, x2: LEFT + 0.5, y1: TOP, y2: TOP + H, class: 'mark' });

var response = [
    [205, 639], [207, 601], [211.5, 550], [215, 513.5], [219, 486.5], [223.7, 468], [228, 453.7], [232, 446.3], [236, 444.5], [240, 446.7],
    [245, 455], [250, 465.3], [253.5, 468], [256.7, 465.3], [262.3, 448.7], [266.7, 436.7], [271, 430.3], [275, 428.7], [283.3, 430.7],
    [289.3, 428.7], [296.7, 423.3], [305, 420], [315.3, 415.7], [326, 420], [336.7, 412], [341.7, 415], [345.7, 425], [349.3, 440],
    [352.7, 446.3], [356, 441.7], [360, 430], [366, 413.3], [370.7, 402], [375.7, 390], [379.3, 387], [383.3, 393.3], [387.3, 411.7],
    [390.3, 422.7], [393, 416], [396, 400], [400, 392.7], [404, 394.7], [406.7, 386.7], [410.7, 360], [413.3, 341.7], [416.3, 336],
    [419.3, 345], [422.7, 366.7], [426.7, 393.3], [429, 400.3], [433.3, 407.3], [439.3, 426.7], [441.7, 430], [446.7, 431.7], [451, 434.7],
    [455, 432.7], [465, 416.7], [469.3, 400], [472.7, 386.7], [474.7, 384.7], [477.7, 391.7], [480, 410], [484, 453.3], [486, 466.7],
    [488.3, 472], [491.7, 465.7], [496.7, 452.3], [499.3, 463.3], [502.7, 506.7], [506, 593.3], [508, 643.3], [508.7, 646], [509.3, 643.3],
    [510.7, 613.3], [513.3, 585], [515.7, 576.7], [521, 559], [523.7, 570], [526.3, 587], [527.7, 580], [530.7, 513.3], [533.3, 443.3],
    [536.7, 398.3], [540.3, 387], [544.7, 395], [549.3, 425], [556, 463.3], [560, 482.3], [566.3, 467.3], [572.3, 480], [578.3, 516.7],
    [581.7, 540], [586.7, 587.7], [588, 580], [593.3, 500], [596.7, 473.3], [598.7, 466], [601, 475], [606.7, 520], [611, 532.3],
    [617.3, 522.7], [625.7, 507.3], [629.3, 513.3], [632.3, 530], [636, 563.3], [638.3, 571], [641.3, 577.7], [644, 600], [646.7, 640],
    [648.7, 670], [649.7, 674.3], [651, 666.7], [655, 616.7], [659, 580], [663, 564.3], [666, 570], [668.7, 590], [671, 601.7], [674, 590],
    [677.3, 573.3], [680.7, 526.7], [682.7, 505], [685.7, 495.3], [689, 503.3], [693.3, 550], [697.3, 606.7], [701, 648.3], [704.7, 670.7],
    [706, 672.3], [707.3, 668.3], [710, 630], [712.7, 593.3], [715.3, 566.7], [718, 560.3], [724.3, 564.7], [727.7, 575], [732.7, 610],
    [737.3, 634.3], [740.7, 641.7], [744.3, 647], [749.3, 657.7], [751.7, 650], [755.7, 616.7], [759.7, 600], [762.7, 610], [768, 638.3],
    [771, 626.7], [775, 593.3], [778.3, 577.3], [781, 572.3], [786.7, 569.7], [794, 556.7], [797.3, 561.3], [802, 568.3], [806, 560.7],
    [810.7, 541], [815, 526], [819.3, 520.7], [823.3, 526], [831.7, 544], [841.7, 575], [846.7, 585.7], [851, 577.3], [856, 557.3],
    [862.7, 540], [869.3, 513.3], [873.3, 501.3], [877.3, 497.3], [881.7, 501], [888.3, 511.7], [892, 515], [900.7, 511.3], [906.7, 515.3],
    [926.7, 544.7], [936, 561.7], [941.3, 566.7], [946.7, 562.7], [953.3, 550], [961.7, 531.7], [970, 522], [980, 524.3], [990, 522],
    [1008, 529], [1022, 531], [1035, 537], [1044, 549], [1053, 567], [1060, 574.5], [1070, 575.5], [1090, 567.5], [1099, 573], [1112, 592],
    [1121, 596], [1141, 587], [1158, 589], [1180, 580], [1192, 571], [1202, 567.5], [1213, 574], [1226, 586], [1247, 586.5], [1282, 593.5],
    [1300, 584], [1317, 576], [1341, 573], [1370, 577], [1400, 585], [1425, 594], [1445, 605], [1458, 612], [1470, 614.5], [1485, 610],
    [1505, 598], [1524, 594.5], [1545, 599], [1575, 613], [1605, 621], [1640, 623.5], [1662, 622], [1690, 613], [1720, 602], [1745, 591],
    [1770, 577], [1790, 567], [1813, 561], [1835, 564], [1855, 574], [1872, 582], [1895, 585.5]
];

// monotone cubic through the points
function smooth(p) {
    var n = p.length, h = [], s = [], m = [];
    for (var i = 0; i < n - 1; i++) {
        h[i] = p[i + 1][0] - p[i][0];
        s[i] = (p[i + 1][1] - p[i][1]) / h[i];
    }
    m[0] = s[0];
    m[n - 1] = 0;
    for (i = 1; i < n - 1; i++) {
        var q = (s[i - 1] * h[i] + s[i] * h[i - 1]) / (h[i - 1] + h[i]);
        m[i] = (Math.sign(s[i - 1]) + Math.sign(s[i])) * Math.min(Math.abs(s[i - 1]), Math.abs(s[i]), Math.abs(q) / 2);
    }
    var d = 'M' + p[0];
    for (i = 0; i < n - 1; i++) {
        var t = h[i] / 3;
        d += 'C' + [p[i][0] + t, p[i][1] + m[i] * t, p[i + 1][0] - t, p[i + 1][1] - m[i + 1] * t, p[i + 1][0], p[i + 1][1]];
    }
    return d;
}
add(canvas, 'path', { d: smooth(response) });

// card previews
var curves = {
    a: ['#006838', 1.4, 'M0 22L3 20 6 19 9 17 11 13 12 19 14 16 15 38 17 18 19 33 20 25 21 38 23 27 24 39 26 28 28 38 30 27 32 32 35 26 38 31 42 29 46 33 50 31 58 34 66 34 74 36 80 33 84 31 88 33'],
    b: ['#4a4ad4', 1.4, 'M0 34L3 25 7 17 9 14 11 40 12 16 14 13 15 38 17 18 19 32 20 24 22 42 24 30 25 44 27 28 30 35 33 26 35 31 37 23 40 30 42 27 46 30 52 29 58 32 66 32 74 33 80 30 84 28 88 30'],
    c: ['#ec7600', 1.4, 'M0 22L3 17 6 18 9 14 11 19 13 15 14 20 16 17 18 28 20 25 22 45 24 26 25 31 26 26 28 31 29 26 30 31 31 27 34 27 38 31 44 32 50 34 58 33 66 34 74 35 80 32 84 31 88 33'],
    d: ['#00a000', 2, 'M0 25L3 20 6 17 9 14 11 20 14 15 16 23 18 21 20 28 22 32 24 26 25 33 27 25 30 31 34 26 38 30 42 29 50 31 58 31 66 32 74 34 80 31 84 29 88 32']
};

document.querySelectorAll('.thumb').forEach(function (box) {
    var c = curves[box.dataset.curve];
    var svg = add(box, 'svg', { class: 'mini', viewBox: '0 0 88 49', preserveAspectRatio: 'none' });
    [11, 17, 21, 24, 27, 28, 30, 40, 46, 49, 51, 53, 55, 57, 58, 68, 74, 78, 81, 84].forEach(function (x) {
        add(svg, 'path', { d: 'M' + x + ' 0V49', stroke: '#e0e0e0' });
    });
    [7, 17, 27, 37].forEach(function (y) {
        add(svg, 'path', { d: 'M0 ' + y + 'H88', stroke: '#e0e0e0', 'stroke-width': 2 });
    });
    add(svg, 'path', { d: c[2], fill: 'none', stroke: c[0], 'stroke-width': c[1] });
});
```
